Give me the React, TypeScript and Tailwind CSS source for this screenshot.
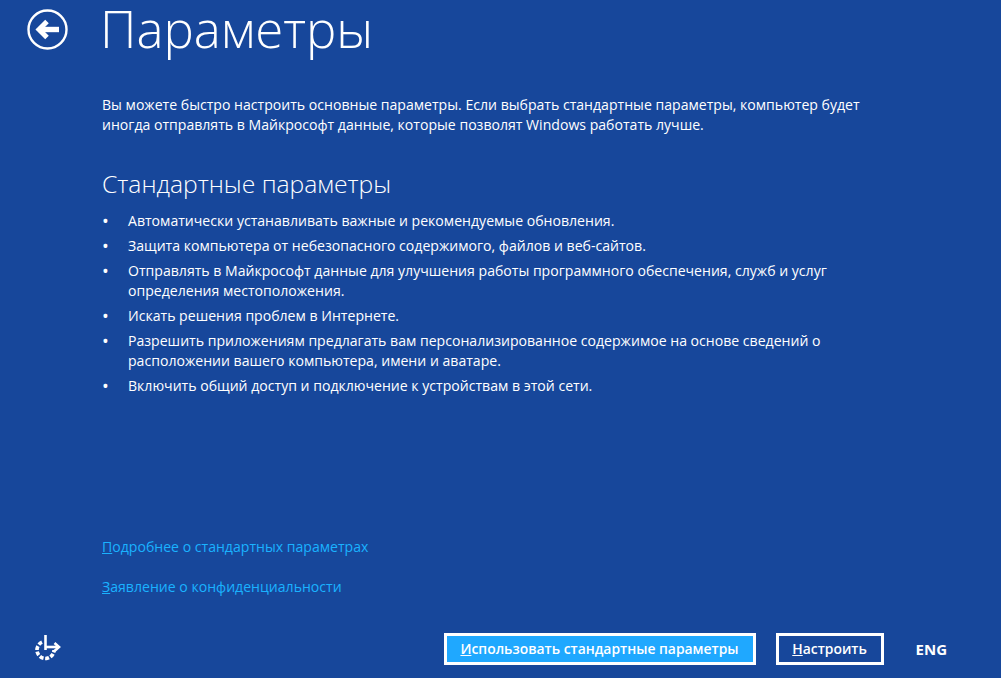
const FONT = "font-['Open_Sans','Noto_Sans',sans-serif]";

const bullets = [
  ['Автоматически устанавливать важные и рекомендуемые обновления.'],
  ['Защита компьютера от небезопасного содержимого, файлов и веб-сайтов.'],
  [
    'Отправлять в Майкрософт данные для улучшения работы программного обеспечения, служб и услуг',
    'определения местоположения.',
  ],
  ['Искать решения проблем в Интернете.'],
  [
    'Разрешить приложениям предлагать вам персонализированное содержимое на основе сведений о',
    'расположении вашего компьютера, имени и аватаре.',
  ],
  ['Включить общий доступ и подключение к устройствам в этой сети.'],
];

export default function App() {
  return (
    <div className={`${FONT} flex h-[678px] w-[1001px] flex-col overflow-hidden bg-[#17479b] text-white`}>
      {/* Header */}
      <div className="flex h-[62px] items-center pl-[27px]">
        <svg width="41" height="41" viewBox="0 0 41 41" fill="none" className="mb-[3px]">
          <circle cx="20.5" cy="20.5" r="19" stroke="white" strokeWidth="2.4" />
          <path d="M32 20.5H13" stroke="white" strokeWidth="5.4" />
          <path d="M20 12.5L12 20.5L20 28.5" stroke="white" strokeWidth="5" />
        </svg>
        <h1 className="ml-[32px] pb-[6px] text-[51px] leading-[62px] font-light">Параметры</h1>
      </div>

      {/* Body */}
      <div className="pt-[33px] pl-[102px] text-[14.08px] leading-[20px]">
        <p>
          Вы можете быстро настроить основные параметры. Если выбрать стандартные параметры, компьютер будет
          <br />
          иногда отправлять в Майкрософт данные, которые позволят Windows работать лучше.
        </p>
        <h2 className="mt-[32px] text-[24.7px] leading-[34px] font-light">Стандартные параметры</h2>
        <ul className="mt-[10px] flex flex-col gap-[5px]">
          {bullets.map((lines) => (
            <li key={lines[0]} className="flex">
              <span className="w-[26px] shrink-0 text-[18px]">•</span>
              <span>
                {lines.map((line) => (
                  <span key={line} className="block">
                    {line}
                  </span>
                ))}
              </span>
            </li>
          ))}
        </ul>
      </div>

      {/* Links */}
      <div className="mt-auto flex flex-col gap-[20px] pl-[102px] text-[14.08px] leading-[20px] text-[#1ab2ff]">
        <a>
          <span className="underline">П</span>одробнее о стандартных параметрах
        </a>
        <a>
          <span className="underline">З</span>аявление о конфиденциальности
        </a>
      </div>

      {/* Footer */}
      <div className="mt-[36px] mb-[13px] flex h-[32px] items-center pr-[54px] pl-[34px]">
        <svg width="28" height="28" viewBox="0 0 28 28" fill="none">
          <path
            d="M8 7.2A8.5 8.5 0 1 0 20 15"
            stroke="white"
            strokeWidth="3.6"
            strokeDasharray="4 1.6"
          />
          <path d="M11.5 0V15" stroke="white" strokeWidth="2.6" />
          <path d="M11.5 12H24" stroke="white" strokeWidth="2.6" />
          <path d="M20.5 8L25 12L20.5 16" stroke="white" strokeWidth="2.6" />
        </svg>
        <button className="ml-auto flex h-[32px] w-[312px] items-center justify-center border-[3px] border-white bg-[#1fa8ff] text-[13.9px] font-semibold">
          <span>
            <span className="underline">И</span>спользовать стандартные параметры
          </span>
        </button>
        <button className="ml-[20px] flex h-[32px] w-[108px] items-center justify-center border-[3px] border-white text-[13.9px] font-semibold">
          <span>
            <span className="underline">Н</span>астроить
          </span>
        </button>
        <span className="ml-[32px] text-[15px] font-bold">ENG</span>
      </div>
    </div>
  );
}
